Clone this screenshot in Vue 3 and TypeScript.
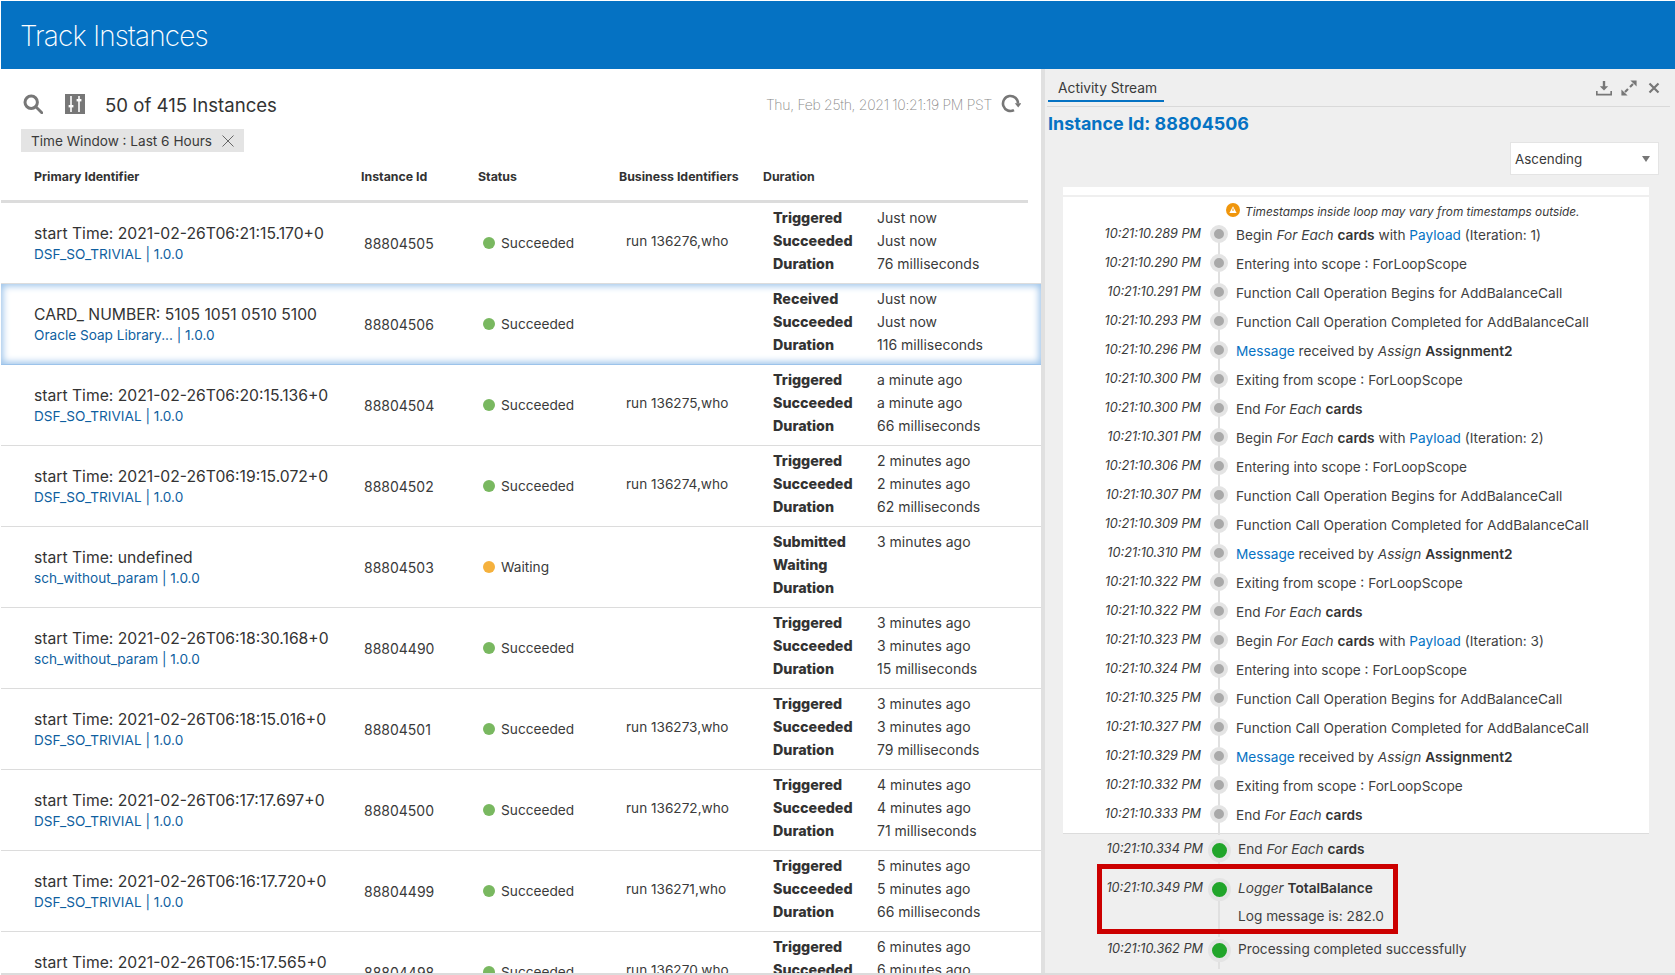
<script setup lang="ts">
interface Row {
  primary: string
  link: string
  id: string
  status: string
  biz: string
  start: string
  when: string
  end: string
  whenEnd: string
  duration: string
  selected?: boolean
}

const r = (
  primary: string, link: string, id: string, biz: string, when: string, ms: string,
): Row => ({
  primary, link, id, status: 'Succeeded', biz, start: 'Triggered', when,
  end: 'Succeeded', whenEnd: when, duration: ms,
})

const rows: Row[] = [
  r('start Time: 2021-02-26T06:21:15.170+0', 'DSF_SO_TRIVIAL | 1.0.0', '88804505', 'run 136276,who', 'Just now', '76 milliseconds'),
  { ...r('CARD_ NUMBER: 5105 1051 0510 5100', 'Oracle Soap Library... | 1.0.0', '88804506', '', 'Just now', '116 milliseconds'), start: 'Received', selected: true },
  r('start Time: 2021-02-26T06:20:15.136+0', 'DSF_SO_TRIVIAL | 1.0.0', '88804504', 'run 136275,who', 'a minute ago', '66 milliseconds'),
  r('start Time: 2021-02-26T06:19:15.072+0', 'DSF_SO_TRIVIAL | 1.0.0', '88804502', 'run 136274,who', '2 minutes ago', '62 milliseconds'),
  { ...r('start Time: undefined', 'sch_without_param | 1.0.0', '88804503', '', '3 minutes ago', ''), status: 'Waiting', start: 'Submitted', end: 'Waiting', whenEnd: '' },
  r('start Time: 2021-02-26T06:18:30.168+0', 'sch_without_param | 1.0.0', '88804490', '', '3 minutes ago', '15 milliseconds'),
  r('start Time: 2021-02-26T06:18:15.016+0', 'DSF_SO_TRIVIAL | 1.0.0', '88804501', 'run 136273,who', '3 minutes ago', '79 milliseconds'),
  r('start Time: 2021-02-26T06:17:17.697+0', 'DSF_SO_TRIVIAL | 1.0.0', '88804500', 'run 136272,who', '4 minutes ago', '71 milliseconds'),
  r('start Time: 2021-02-26T06:16:17.720+0', 'DSF_SO_TRIVIAL | 1.0.0', '88804499', 'run 136271,who', '5 minutes ago', '66 milliseconds'),
  r('start Time: 2021-02-26T06:15:17.565+0', 'DSF_SO_TRIVIAL | 1.0.0', '88804498', 'run 136270,who', '6 minutes ago', '64 milliseconds'),
]

type Kind = 'begin' | 'enter' | 'fnb' | 'fnc' | 'msg' | 'exit' | 'end'
interface Ev { time: string; kind: Kind; iter?: number }

const ev = (time: string, kind: Kind, iter?: number): Ev => ({ time, kind, iter })

const events: Ev[] = [
  ev('10:21:10.289 PM', 'begin', 1), ev('10:21:10.290 PM', 'enter'), ev('10:21:10.291 PM', 'fnb'),
  ev('10:21:10.293 PM', 'fnc'), ev('10:21:10.296 PM', 'msg'), ev('10:21:10.300 PM', 'exit'),
  ev('10:21:10.300 PM', 'end'), ev('10:21:10.301 PM', 'begin', 2), ev('10:21:10.306 PM', 'enter'),
  ev('10:21:10.307 PM', 'fnb'), ev('10:21:10.309 PM', 'fnc'), ev('10:21:10.310 PM', 'msg'),
  ev('10:21:10.322 PM', 'exit'), ev('10:21:10.322 PM', 'end'), ev('10:21:10.323 PM', 'begin', 3),
  ev('10:21:10.324 PM', 'enter'), ev('10:21:10.325 PM', 'fnb'), ev('10:21:10.327 PM', 'fnc'),
  ev('10:21:10.329 PM', 'msg'), ev('10:21:10.332 PM', 'exit'), ev('10:21:10.333 PM', 'end'),
]
</script>

<template>
  <div class="page">
    <header class="banner">Track Instances</header>
    <main class="body">
      <section class="left">
        <div class="toolbar">
          <svg class="ico-search" viewBox="0 0 20 20" width="20" height="20">
            <circle cx="8.2" cy="8.2" r="6.2" fill="none" stroke="#777" stroke-width="3" />
            <path d="M12.8 12.8 L18.8 18.8" stroke="#777" stroke-width="2.8" stroke-linecap="round" />
          </svg>
          <svg class="ico-filter" viewBox="0 0 20 20" width="20" height="20">
            <rect width="20" height="20" fill="#777" />
            <path d="M6 2v16M14 2v16" stroke="#fff" stroke-width="1.6" />
            <rect x="3.6" y="11" width="4.8" height="2.4" fill="#fff" />
            <rect x="11.6" y="5" width="4.8" height="2.4" fill="#fff" />
          </svg>
          <span class="count">50 of 415 Instances</span>
          <span class="stamp">Thu, Feb 25th, 2021 10:21:19 PM PST</span>
          <svg class="ico-refresh" viewBox="0 0 20 20" width="20" height="20">
            <path d="M13 16.1 A7.5 7.5 0 1 1 17 9.5" fill="none" stroke="#777" stroke-width="2.6" />
            <path d="M13.8 9.2 L20.4 9.2 L17.2 13.6 Z" fill="#777" />
          </svg>
        </div>
        <div class="chip">
          <span>Time Window : Last 6 Hours</span>
          <svg viewBox="0 0 12 12" width="12" height="12"><path d="M.5.5l11 11M11.5.5l-11 11" stroke="#666" stroke-width="1" /></svg>
        </div>
        <div class="thead">
          <span>Primary Identifier</span>
          <span>Instance Id</span>
          <span>Status</span>
          <span>Business Identifiers</span>
          <span>Duration</span>
        </div>
        <div class="list">
          <div v-for="row in rows" :key="row.id" class="row" :class="{ selected: row.selected }">
            <div class="primary">
              <div class="ptext">{{ row.primary }}</div>
              <div class="plink">{{ row.link }}</div>
            </div>
            <div class="iid">{{ row.id }}</div>
            <div class="status">
              <i class="sdot" :class="{ wait: row.status === 'Waiting' }"></i>{{ row.status }}
            </div>
            <div class="biz">{{ row.biz }}</div>
            <div class="times">
              <b>{{ row.start }}</b><span>{{ row.when }}</span>
              <b>{{ row.end }}</b><span>{{ row.whenEnd }}</span>
              <b>Duration</b><span>{{ row.duration }}</span>
            </div>
          </div>
        </div>
      </section>

      <aside class="right">
        <div class="tabs">
          <div class="tab">Activity Stream</div>
          <div class="actions">
            <svg viewBox="0 0 16 16" width="16" height="16">
              <path d="M8 1v7" stroke="#777" stroke-width="2.4" />
              <path d="M3.8 6.2h8.4L8 10.6Z" fill="#777" />
              <path d="M0.8 11v3.6h14.4V11" fill="none" stroke="#777" stroke-width="1.7" />
            </svg>
            <svg viewBox="0 0 16 16" width="16" height="16">
              <path d="M9.4.4h6.2v6.2ZM6.6 15.6H.4V9.4Z" fill="#777" />
              <path d="M12 4L9 7M4 12L7 9" stroke="#777" stroke-width="2.2" />
            </svg>
            <svg class="ico-close" viewBox="0 0 12 12" width="12" height="12">
              <path d="M1.5 1.5l9 9M10.5 1.5l-9 9" stroke="#777" stroke-width="2.2" />
            </svg>
          </div>
        </div>
        <h2 class="inst">Instance Id: 88804506</h2>
        <div class="sortbar">
          <div class="select">
            <span>Ascending</span>
            <i class="caret"></i>
          </div>
        </div>
        <div class="stream">
          <div class="stub"></div>
          <div class="card">
            <div class="note">
              <svg viewBox="0 0 14 14" width="14" height="14">
                <circle cx="7" cy="7" r="7" fill="#f0960c" />
                <path d="M7 3.2L10.6 10H3.4Z" fill="#fff" />
                <path d="M7 5.6v2.4" stroke="#f0960c" stroke-width="1.1" />
              </svg>
              <em>Timestamps inside loop may vary from timestamps outside.</em>
            </div>
            <div v-for="(e, i) in events" :key="i" class="ev">
              <time>{{ e.time }}</time>
              <span class="node"><i></i></span>
              <div class="msg">
                <template v-if="e.kind === 'begin'">Begin <em>For Each</em> <b>cards</b> with <a>Payload</a> (Iteration: {{ e.iter }})</template>
                <template v-else-if="e.kind === 'enter'">Entering into scope : ForLoopScope</template>
                <template v-else-if="e.kind === 'fnb'">Function Call Operation Begins for AddBalanceCall</template>
                <template v-else-if="e.kind === 'fnc'">Function Call Operation Completed for AddBalanceCall</template>
                <template v-else-if="e.kind === 'msg'"><a>Message</a> received by <em>Assign</em> <b>Assignment2</b></template>
                <template v-else-if="e.kind === 'exit'">Exiting from scope : ForLoopScope</template>
                <template v-else>End <em>For Each</em> <b>cards</b></template>
              </div>
            </div>
          </div>
          <div class="outer">
            <div class="ev2">
              <time>10:21:10.334 PM</time>
              <span class="node big"><i></i></span>
              <div class="msg">End <em>For Each</em> <b>cards</b></div>
            </div>
            <div class="logged">
              <div class="ev2">
                <time>10:21:10.349 PM</time>
                <span class="node big"><i></i></span>
                <div class="msg"><em>Logger</em> <b>TotalBalance</b></div>
              </div>
              <div class="logline">
                <span class="stem"></span>
                <div class="msg">Log message is: 282.0</div>
              </div>
              <div class="annotation"></div>
            </div>
            <div class="ev2">
              <time>10:21:10.362 PM</time>
              <span class="node big"><i></i></span>
              <div class="msg">Processing completed successfully</div>
            </div>
          </div>
        </div>
      </aside>
    </main>
  </div>
</template>

<style>
html, body { margin: 0; background: #fff; }
</style>

<style scoped>
.page {
  width: 1675px;
  height: 975px;
  box-sizing: border-box;
  padding: 1px 0 0 1px;
  overflow: hidden;
  display: flex;
  flex-direction: column;
  font-family: Inter, "Liberation Sans", sans-serif;
  color: #3a3a3a;
  background: #fff;
}
.banner {
  height: 68px;
  flex: none;
  background: #0572c3;
  color: #fff;
  font-size: 28px;
  font-weight: 200;
  letter-spacing: -0.85px;
  line-height: 70px;
  padding-left: 19px;
}
.body {
  flex: none;
  height: 904px;
  display: flex;
  border-bottom: 2px solid #dcdcdc;
}
.left {
  width: 1040px;
  flex: none;
  display: flex;
  flex-direction: column;
  overflow: hidden;
}
.toolbar {
  display: flex;
  align-items: center;
  height: 20px;
  margin-top: 25px;
  padding: 0 20px 0 22px;
}
.ico-filter { margin-left: 22px; }
.count { margin: 2px 0 0 20px; font-size: 18.6px; color: #333; }
.stamp {
  margin-left: auto;
  font-size: 14px;
  font-weight: 200;
  letter-spacing: -0.3px;
  color: #888;
}
.ico-refresh { margin-left: 9px; }
.chip {
  align-self: flex-start;
  margin: 15px 0 0 20px;
  height: 23px;
  width: 223px;
  box-sizing: border-box;
  background: #e4e4e4;
  display: flex;
  align-items: center;
  justify-content: space-between;
  padding: 0 10px;
  font-size: 13.6px;
}
.thead {
  display: grid;
  grid-template-columns: 327px 117px 141px 144px 1fr;
  padding-left: 33px;
  height: 48px;
  align-items: center;
  font-size: 12.35px;
  font-weight: 700;
  color: #333;
  border-bottom: 3px solid #dcdcdc;
  box-sizing: content-box;
  margin-right: 13px;
}
.list { flex: 1; overflow: hidden; }
.row {
  display: grid;
  grid-template-columns: 330px 119px 143px 147px 1fr;
  padding-left: 33px;
  height: 81px;
  box-sizing: border-box;
  border-bottom: 1px solid #dcdcdc;
  align-items: center;
  font-size: 14px;
}
.row.selected {
  box-shadow: inset 0 0 7px 2px #9cc3ea;
  border-bottom-color: #9cc3ea;
}
.ptext { font-size: 15.7px; line-height: 20px; color: #333; }
.plink { font-size: 13.6px; line-height: 20px; color: #0f5f9f; }
.primary { margin-top: 1px; }
.status { display: flex; align-items: center; font-size: 13.7px; }
.sdot {
  width: 12px;
  height: 12px;
  border-radius: 50%;
  background: #79b860;
  margin-right: 6px;
}
.sdot.wait { background: #f5b13d; }
.biz { margin-top: -5px; font-size: 13.6px; }
.times {
  display: grid;
  grid-template-columns: 104px 1fr;
  align-self: start;
  margin-top: 3px;
  line-height: 23px;
}
.times b { font-weight: 800; font-size: 14.3px; color: #333; }

.right {
  flex: 1;
  background: #efefef;
  border-left: 4px solid #e0e0e0;
  display: flex;
  flex-direction: column;
  overflow: hidden;
  padding-left: 2px;
}
.tabs {
  height: 37px;
  flex: none;
  display: flex;
  justify-content: space-between;
  border-bottom: 1px solid #d9d9d9;
  margin-right: 5px;
}
.tab {
  width: 116px;
  height: 33px;
  box-sizing: border-box;
  margin-left: 1px;
  padding: 11px 0 0 10px;
  font-size: 13.8px;
  line-height: 17px;
  border-bottom: 2px solid #0572c3;
}
.actions {
  display: flex;
  align-items: center;
  gap: 9px;
  padding: 9px 10px 0 0;
  height: 20px;
}
.ico-close { margin-left: 2px; }
.inst {
  margin: 5px 0 0 1px;
  font-size: 17.95px;
  line-height: 24px;
  font-weight: 700;
  color: #0572c3;
}
.sortbar {
  display: flex;
  justify-content: flex-end;
  margin-top: 6px;
  padding-right: 16px;
}
.select {
  width: 149px;
  height: 33px;
  box-sizing: border-box;
  background: #fff;
  border: 1px solid #e4e4e4;
  display: flex;
  align-items: center;
  justify-content: space-between;
  padding: 0 8px 0 4px;
  font-size: 13.4px;
}
.caret {
  width: 0;
  height: 0;
  border-left: 4.5px solid transparent;
  border-right: 4.5px solid transparent;
  border-top: 6px solid #777;
}
.stream { margin: 12px 26px 0 16px; }
.stub { height: 8px; background: #fff; }
.card {
  margin-top: 2px;
  background: #fff;
  border-bottom: 1px solid #dcdcdc;
  box-sizing: border-box;
  height: 637px;
  padding-top: 8px;
}
.note {
  display: flex;
  align-items: center;
  gap: 5px;
  height: 14px;
  padding-left: 163px;
  font-size: 11.85px;
  margin-bottom: 7px;
}
.note svg { margin-top: -4px; }
.ev {
  display: grid;
  grid-template-columns: 138px 36px 1fr;
  height: 29px;
  align-items: start;
}
.ev .node i { margin-top: -1px; }
.ev .msg { margin-left: -1px; }
.ev time, .ev2 time {
  font-size: 12.7px;
  font-style: italic;
  text-align: right;
  line-height: 16px;
}
.node {
  position: relative;
  display: flex;
  justify-content: center;
  height: 100%;
}
.node::before {
  content: "";
  position: absolute;
  top: 0;
  bottom: 0;
  left: calc(50% - 1px);
  width: 2px;
  background: #e0e0e0;
}
.node i {
  position: relative;
  width: 10px;
  height: 10px;
  flex: none;
  border-radius: 50%;
  background: #a9a9a9;
  border: 4px solid #e4e4e4;
}
.msg { font-size: 13.67px; line-height: 18px; color: #3f3f3f; }
.msg a { color: #0572c3; }
.msg b { font-weight: 600; color: #333; }
.outer { padding-top: 6px; }
.ev2 {
  display: grid;
  grid-template-columns: 140px 32px 1fr;
  height: 29px;
  align-items: start;
}
.ev2 time { margin-top: 1px; }
.ev2 .msg { margin-left: 3px; }
.node.big i {
  width: 15px;
  height: 15px;
  margin-top: -1px;
  background: #21a52a;
  border-color: #e4e4e4;
}
.logged { position: relative; margin: 10px 0 3px; }
.logline {
  display: grid;
  grid-template-columns: 140px 32px 1fr;
  height: 29px;
}
.logline .msg { margin: -1px 0 0 3px; }
.stem { position: relative; grid-column: 2; }
.stem::before {
  content: "";
  position: absolute;
  top: 0;
  bottom: 0;
  left: calc(50% - 1px);
  width: 2px;
  background: #e0e0e0;
}
.annotation {
  position: absolute;
  left: 34px;
  top: -15px;
  width: 301px;
  height: 70px;
  box-sizing: border-box;
  border: 5px solid #cc0000;
}
</style>
